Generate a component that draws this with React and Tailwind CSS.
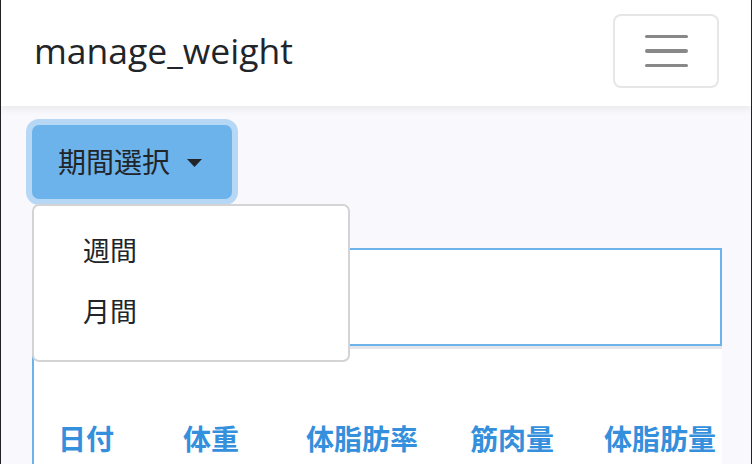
import React from "react";

export default function App() {
  const font = { fontFamily: '"Lato", "Noto Sans CJK JP", sans-serif' };
  return (
    <div
      className="w-[752px] h-[464px] overflow-hidden border-x border-[#222] bg-[#f8f8fd] relative"
      style={font}
    >
      <nav className="relative z-10 h-[106px] bg-white shadow-[0_3px_7px_rgba(0,0,0,0.07)] flex items-center justify-between pl-[33px] pr-[32px]">
        <span
          className="text-[35.5px] text-[#212529] leading-none -mt-[4px]"
          style={{ fontFamily: '"Open Sans", sans-serif' }}
        >
          manage_weight
        </span>
        <button className="w-[106px] h-[74px] border-2 border-[#e6e6e6] rounded-[8px] flex flex-col items-center justify-center gap-[11px] mt-[-4px]">
          <span className="block w-[43px] h-[3.5px] rounded-full bg-[#888]" />
          <span className="block w-[43px] h-[3.5px] rounded-full bg-[#888]" />
          <span className="block w-[43px] h-[3.5px] rounded-full bg-[#888]" />
        </button>
      </nav>

      <main className="pl-[31px] pr-[31px] pt-[19px]">
        <div className="relative z-20 w-max">
          <button className="h-[74px] w-[200px] bg-[#6cb2eb] rounded-[7px] ring-[6px] ring-[#b6d8f5] flex items-center pl-[26px] gap-[17px] text-[28px] text-[#212529]">
            <span className="leading-none">期間選択</span>
            <svg width="15" height="8" viewBox="0 0 15 8" className="mt-[2px]">
              <path d="M0 0 L15 0 L7.5 8 Z" fill="#212529" />
            </svg>
          </button>
          <div className="absolute left-0 top-[79px] w-[318px] h-[158px] bg-white border-2 border-[#d4d4d6] rounded-[7px] flex flex-col pt-[25px] text-[27px] text-[#212529]">
            <div className="pl-[49px] h-[38px] flex items-center leading-none">週間</div>
            <div className="pl-[49px] h-[38px] mt-[23px] flex items-center leading-none">月間</div>
          </div>
        </div>

        <div className="mt-[49px] w-[690px]">
          <div className="h-[98px] bg-white border-2 border-[#6cb2eb]" />
          <div className="h-[130px] bg-white border-l-2 border-[#6cb2eb] border-t-[3px] border-t-[#e6e6ea]">
            <div className="flex pt-[76px] pl-[24px] text-[28px] font-bold text-[#3490dc] leading-none">
              <span className="w-[125px]">日付</span>
              <span className="w-[123px]">体重</span>
              <span className="w-[164px]">体脂肪率</span>
              <span className="w-[134px]">筋肉量</span>
              <span>体脂肪量</span>
            </div>
          </div>
        </div>
      </main>
    </div>
  );
}
